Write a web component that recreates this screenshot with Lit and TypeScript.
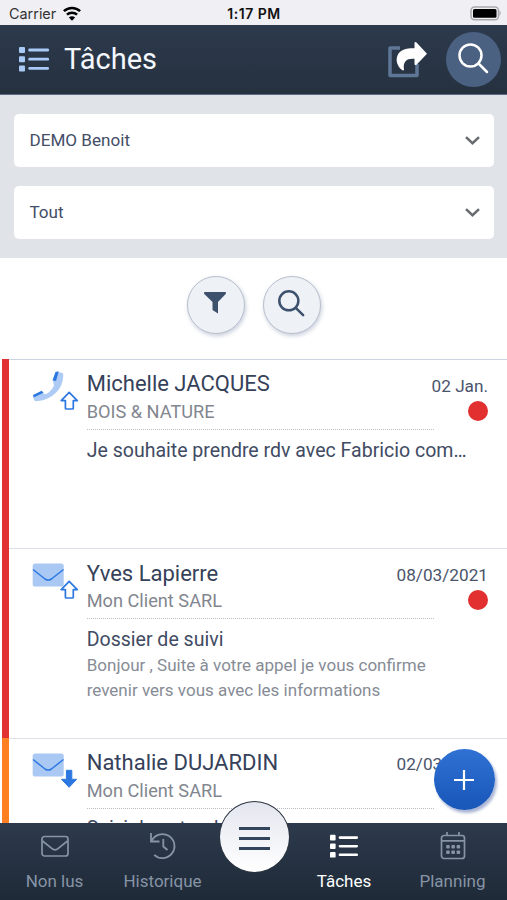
import { LitElement, html, svg, css, nothing } from "lit";
import { customElement, property } from "lit/decorators.js";

type Kind = "call" | "mail";
type Level = "up" | "down";

interface Task {
  name: string;
  company: string;
  date: string;
  kind: Kind;
  level: Level;
  tone: "red" | "orange";
  dot: boolean;
  subject: string;
  lines: string[];
}

const TASKS: Task[] = [
  { name: "Michelle JACQUES", company: "BOIS & NATURE", date: "02 Jan.", kind: "call", level: "up", tone: "red", dot: true, subject: "Je souhaite prendre rdv avec Fabricio com…", lines: [] },
  { name: "Yves Lapierre", company: "Mon Client SARL", date: "08/03/2021", kind: "mail", level: "up", tone: "red", dot: true, subject: "Dossier de suivi", lines: ["Bonjour , Suite à votre appel je vous confirme", "revenir vers vous avec les informations"] },
  { name: "Nathalie DUJARDIN", company: "Mon Client SARL", date: "02/03/2021", kind: "mail", level: "down", tone: "orange", dot: false, subject: "Suivi de votre d", lines: [] },
];

const listIcon = svg`
  <g fill="currentColor">
    <rect x="0" y="0" width="6" height="6" rx="1"/><rect x="0" y="9.2" width="6" height="6" rx="1"/><rect x="0" y="18.4" width="6" height="6" rx="1"/>
    <rect x="9.3" y="1.6" width="20.7" height="2.8" rx="1.2"/><rect x="9.3" y="10.8" width="20.7" height="2.8" rx="1.2"/><rect x="9.3" y="20" width="20.7" height="2.8" rx="1.2"/>
  </g>`;

const lens = svg`<g fill="none" stroke="currentColor"><circle cx="12.5" cy="12.5" r="11"/><path d="M20.5 20.5L29 29" stroke-linecap="round"/></g>`;

@customElement("task-icon")
export class TaskIcon extends LitElement {
  @property() kind: Kind = "mail";
  @property() level: Level = "up";
  static styles = css`
    :host { display: block; width: 48px; height: 44px; }
    svg { display: block; }
  `;
  render() {
    const base = this.kind === "call"
      ? svg`
        <path d="M25.500 1.200L30 1.800Q31.300 2.200 31.300 4C31 14 27 20 20 25C14 29 9 30 4 30.200Q2 30.200 1.300 26L10 21.500L13 23.200C17 22 20.500 18.500 22 14L20.800 9.800Z" fill="#aecbf5"/>
        <path d="M23.500 0.900L26.800 0.300L24 10L20.500 9.300Z" fill="#2c78e0"/>
        <path d="M1 24L9.700 19.800L11.500 21.700L1.600 26.600Z" fill="#2c78e0"/>`
      : svg`
        <rect x="0.700" y="3.500" width="31" height="23" rx="2.600" fill="#a9c8f4"/>
        <path d="M1 9.500L13 19Q16.200 21.100 19.400 19L31.500 9.500" fill="none" stroke="#2c78e0" stroke-width="1.500"/>`;
    const arrow = this.level === "up"
      ? svg`<path d="M37.200 21.300L45.300 29.600H41.300V37.200Q41.300 38 40.500 38H34.200Q33.400 38 33.400 37.200V29.600H29.200Z" fill="#fff" stroke="#2c78e0" stroke-width="1.700" stroke-linejoin="round"/>`
      : svg`<path d="M34.400 20.300H39.800V29.300H44.700L37.100 37.300L29.500 29.300H34.400Z" fill="#2c78e0" stroke="#2c78e0" stroke-width="1" stroke-linejoin="round"/>`;
    return html`<svg width="48" height="44" viewBox="0 0 48 44">${base}${arrow}</svg>`;
  }
}

@customElement("task-row")
export class TaskRow extends LitElement {
  @property({ attribute: false }) task!: Task;
  static styles = css`
    :host { display: block; height: 189.400px; flex: none; }
    .row { box-sizing: border-box; height: 100%; display: flex; margin-left: 2px; border-left: 7.500px solid; border-top: 0; }
    .red { border-color: #e23131; }
    .orange { border-color: #ff8021; }
    .inner { flex: 1; min-width: 0; border-top: 1.500px solid #dde1e7; display: grid; grid-template-columns: 55.200px 1fr; padding-left: 22.500px; }
    .first .inner { border-top-color: #ccd4e2; }
    task-icon { margin-top: 11px; }
    .body { min-width: 0; }
    .head { position: relative; height: 69.500px; }
    .name { padding-top: 11.300px; font-size: 22px; line-height: 26px; color: #36415a; white-space: nowrap; }
    .company { font-size: 18.200px; line-height: 24px; margin-top: 2.700px; color: #82868f; white-space: nowrap; }
    .rule { margin-top: 5px; width: 347px; border-top: 1.300px dotted #b9bcc2; }
    .side { position: absolute; right: 19px; top: 15.500px; display: flex; flex-direction: column; align-items: flex-end; gap: 5px; }
    .date { font-size: 17.200px; line-height: 20px; color: #4a546b; white-space: nowrap; }
    .dot { width: 20px; height: 20px; border-radius: 50%; background: #e23030; }
    .subject { margin-top: 8px; font-size: 19.550px; line-height: 26px; color: #414b63; white-space: nowrap; }
    .line { font-size: 17.030px; line-height: 25.400px; color: #878c96; white-space: nowrap; }
  `;
  render() {
    const t = this.task;
    return html`
      <div class="row ${t.tone} ${t.kind === "call" ? "first" : ""}">
        <div class="inner">
          <task-icon .kind=${t.kind} .level=${t.level}></task-icon>
          <div class="body">
            <div class="head">
              <div class="name">${t.name}</div>
              <div class="company">${t.company}</div>
              <div class="rule"></div>
              <div class="side"><div class="date">${t.date}</div>${t.dot ? html`<div class="dot"></div>` : nothing}</div>
            </div>
            <div class="subject">${t.subject}</div>
            ${t.lines.map((l) => html`<div class="line">${l}</div>`)}
          </div>
        </div>
      </div>`;
  }
}

@customElement("app-root")
export class AppRoot extends LitElement {
  static styles = css`
    :host { display: flex; flex-direction: column; width: 507px; height: 900px; overflow: hidden; position: relative; background: #fff; font-family: Roboto, "Liberation Sans", sans-serif; }
    svg { display: block; overflow: visible; flex: none; }
    .status { flex: none; height: 25px; background: #efeff4; display: grid; grid-template-columns: 1fr auto 1fr; align-items: center; padding: 2px 6px 0 9px; box-sizing: border-box; font-family: Inter, sans-serif; font-size: 14px; color: #111; }
    .carrier { display: flex; align-items: center; gap: 7px; font-size: 14.400px; color: #333; }
    .clock { font-weight: 600; letter-spacing: 0.500px; margin-right: 2px; }
    .batt { justify-self: end; }
    .header { flex: none; height: 70px; box-sizing: border-box; border-bottom: 1.500px solid #5f6a84; background: linear-gradient(#2d3a4d, #25313f); display: flex; align-items: center; padding: 0 6px 0 19px; color: #a9c9f6; }
    .title { margin: -2px auto 0 15px; font-size: 29px; font-weight: 400; color: #f4f8fd; line-height: 36px; }
    .round { width: 55px; height: 55px; margin-left: 19px; border-radius: 50%; background: #4b6182; display: grid; place-items: center; color: #fff; }
    .round svg { margin: -3px 2px 0 0; }
    .filters { flex: none; height: 163px; box-sizing: border-box; background: #e0e3e8; padding: 19px 13px 0 14px; display: flex; flex-direction: column; gap: 19px; }
    .select { height: 53px; box-sizing: border-box; border-radius: 5px; background: #fff; display: flex; align-items: center; justify-content: space-between; padding: 0 14px 0 15.500px; font-size: 17.100px; color: #434e66; }
    .select span { margin-top: -2px; }
    .tools { flex: none; height: 101px; box-sizing: border-box; padding-top: 17.500px; display: flex; justify-content: center; gap: 18px; }
    .tool { box-sizing: border-box; width: 58px; height: 58px; border-radius: 50%; border: 1.500px solid #b9c0cd; background: #eef1f6; box-shadow: 1px 2px 4px #c9cfdc; display: grid; place-items: center; color: #3d506c; }
    .tool svg { margin: -3px 1px 0 0; }
    .list { flex: 1; min-height: 0; overflow: hidden; display: flex; flex-direction: column; }
    .nav { flex: none; height: 77px; display: grid; grid-template-columns: 109px 107px 74px 108px 109px; background: linear-gradient(#2d3a4d, #1e2a37); color: #8794a6; }
    .tab { display: flex; flex-direction: column; align-items: center; justify-content: space-between; padding: 8px 0 8.500px; font-size: 17px; line-height: 22px; white-space: nowrap; box-sizing: border-box; }
    .active { color: #fff; }
    .menu { position: absolute; left: 218.500px; top: 800.500px; width: 71px; height: 72px; box-sizing: border-box; border-radius: 50%; border: 1.500px solid #2b3440; background: linear-gradient(#e4e6ef, #fff); display: grid; place-items: center; }
    .menu svg { margin-top: 3px; }
    .fab { position: absolute; left: 433.500px; top: 749px; width: 61px; height: 61px; border-radius: 50%; background: linear-gradient(#2f72d4, #1856b8); box-shadow: 2px 3px 3px #a9b4d4; display: grid; place-items: center; }
  `;

  private select(label: string) {
    return html`<div class="select"><span>${label}</span>
      <svg width="15" height="9" viewBox="0 0 15 9"><path d="M1 1.200L7.500 7.200L14 1.200" fill="none" stroke="#686b70" stroke-width="2.500"/></svg></div>`;
  }

  render() {
    return html`
      <div class="status">
        <div class="carrier"><span>Carrier</span>
          <svg width="18" height="14" viewBox="0 0 18 14"><g fill="none" stroke="#000" stroke-width="2.500"><path d="M0.900 4.200A11.700 11.700 0 0 1 17.100 4.200"/><path d="M3.900 7.700A7.500 7.500 0 0 1 14.100 7.700"/></g><path d="M5.900 10.500A4.400 4.400 0 0 1 12.100 10.500L9 13.700Z"/></svg>
        </div>
        <div class="clock">1:17 PM</div>
        <svg class="batt" width="31" height="15" viewBox="0 0 31 15"><rect x="1" y="1" width="27.500" height="12.800" rx="3.500" fill="#efeff4" stroke="#a9a9ad" stroke-width="1.500"/><rect x="3" y="3" width="23.500" height="8.800" rx="1.500"/><path d="M29.500 4.500Q32 7.200 29.500 10Z" fill="#a9a9ad"/></svg>
      </div>
      <div class="header">
        <svg width="30" height="25" viewBox="0 0 30 25">${listIcon}</svg>
        <h1 class="title">Tâches</h1>
        <svg width="39" height="36" viewBox="0 0 39 36">
          <path d="M12 6H2V33.500H29V22" fill="none" stroke="#5f7797" stroke-width="3.500" stroke-linejoin="round"/>
          <path d="M26.500 0.500Q27.500 -0.500 28.500 0.500L39 11.700L28.500 22.800Q27.500 23.500 26.500 22.500V16.800C20 16 14.500 18.500 16 27.500Q15.500 29 14 28C9 24 7.500 18 9.500 13.500C12 8 18 6.200 26.500 6.300Z" fill="#fff"/>
        </svg>
        <div class="round"><svg width="30" height="30" viewBox="0 0 30 30" stroke-width="2.500">${lens}</svg></div>
      </div>
      <div class="filters">${this.select("DEMO Benoit")}${this.select("Tout")}</div>
      <div class="tools">
        <div class="tool"><svg width="24" height="24" viewBox="0 0 24 24"><path d="M1.500 1H22.500Q23.500 2 22.700 3L15 11V22.600L9.500 19V11L1.300 3Q0.500 2 1.500 1Z" fill="currentColor"/></svg></div>
        <div class="tool"><svg width="26" height="26" viewBox="0 0 30 30" stroke-width="2.900">${lens}</svg></div>
      </div>
      <div class="list">${TASKS.map((t) => html`<task-row .task=${t}></task-row>`)}</div>
      <div class="nav">
        <div class="tab"><svg width="28" height="30" viewBox="0 0 28 30"><g fill="none" stroke="currentColor" stroke-width="1.700"><rect x="1" y="5.500" width="26" height="19.500" rx="2.500"/><path d="M1.500 10L12 18.300Q14 19.500 16 18.300L26.500 10"/></g></svg><span>Non lus</span></div>
        <div class="tab"><svg width="28" height="30" viewBox="0 0 28 30"><g fill="none" stroke="currentColor" stroke-width="1.800"><path d="M2 2V10.500H10.500"/><path d="M2.600 10A12 12 0 1 1 5.200 23.800"/><path d="M14.300 8V15.500L18.500 19"/></g></svg><span>Historique</span></div>
        <div></div>
        <div class="tab active"><svg width="28" height="30" viewBox="0 -4 30 32">${listIcon}</svg><span>Tâches</span></div>
        <div class="tab"><svg width="26" height="30" viewBox="0 0 26 30"><g fill="none" stroke="currentColor" stroke-width="1.700"><rect x="1.500" y="4.500" width="23" height="23" rx="2.500"/><path d="M1.500 9.800H24.500M7 1V5M19 1V5"/></g><g fill="currentColor">${[6.2, 11.4, 16.6].map((x) => [14, 19.5].map((y) => svg`<rect x=${x} y=${y} width="3.500" height="3.500" rx="0.800"/>`))}</g></svg><span>Planning</span></div>
      </div>
      <div class="menu"><svg width="31" height="25" viewBox="0 0 31 25"><path d="M0 2.500H31M0 12.500H31M0 22.500H31" stroke="#33455c" stroke-width="3"/></svg></div>
      <div class="fab"><svg width="20" height="20" viewBox="0 0 20 20"><path d="M10 0V20M0 10H20" stroke="#fff" stroke-width="2.200"/></svg></div>
    `;
  }
}
